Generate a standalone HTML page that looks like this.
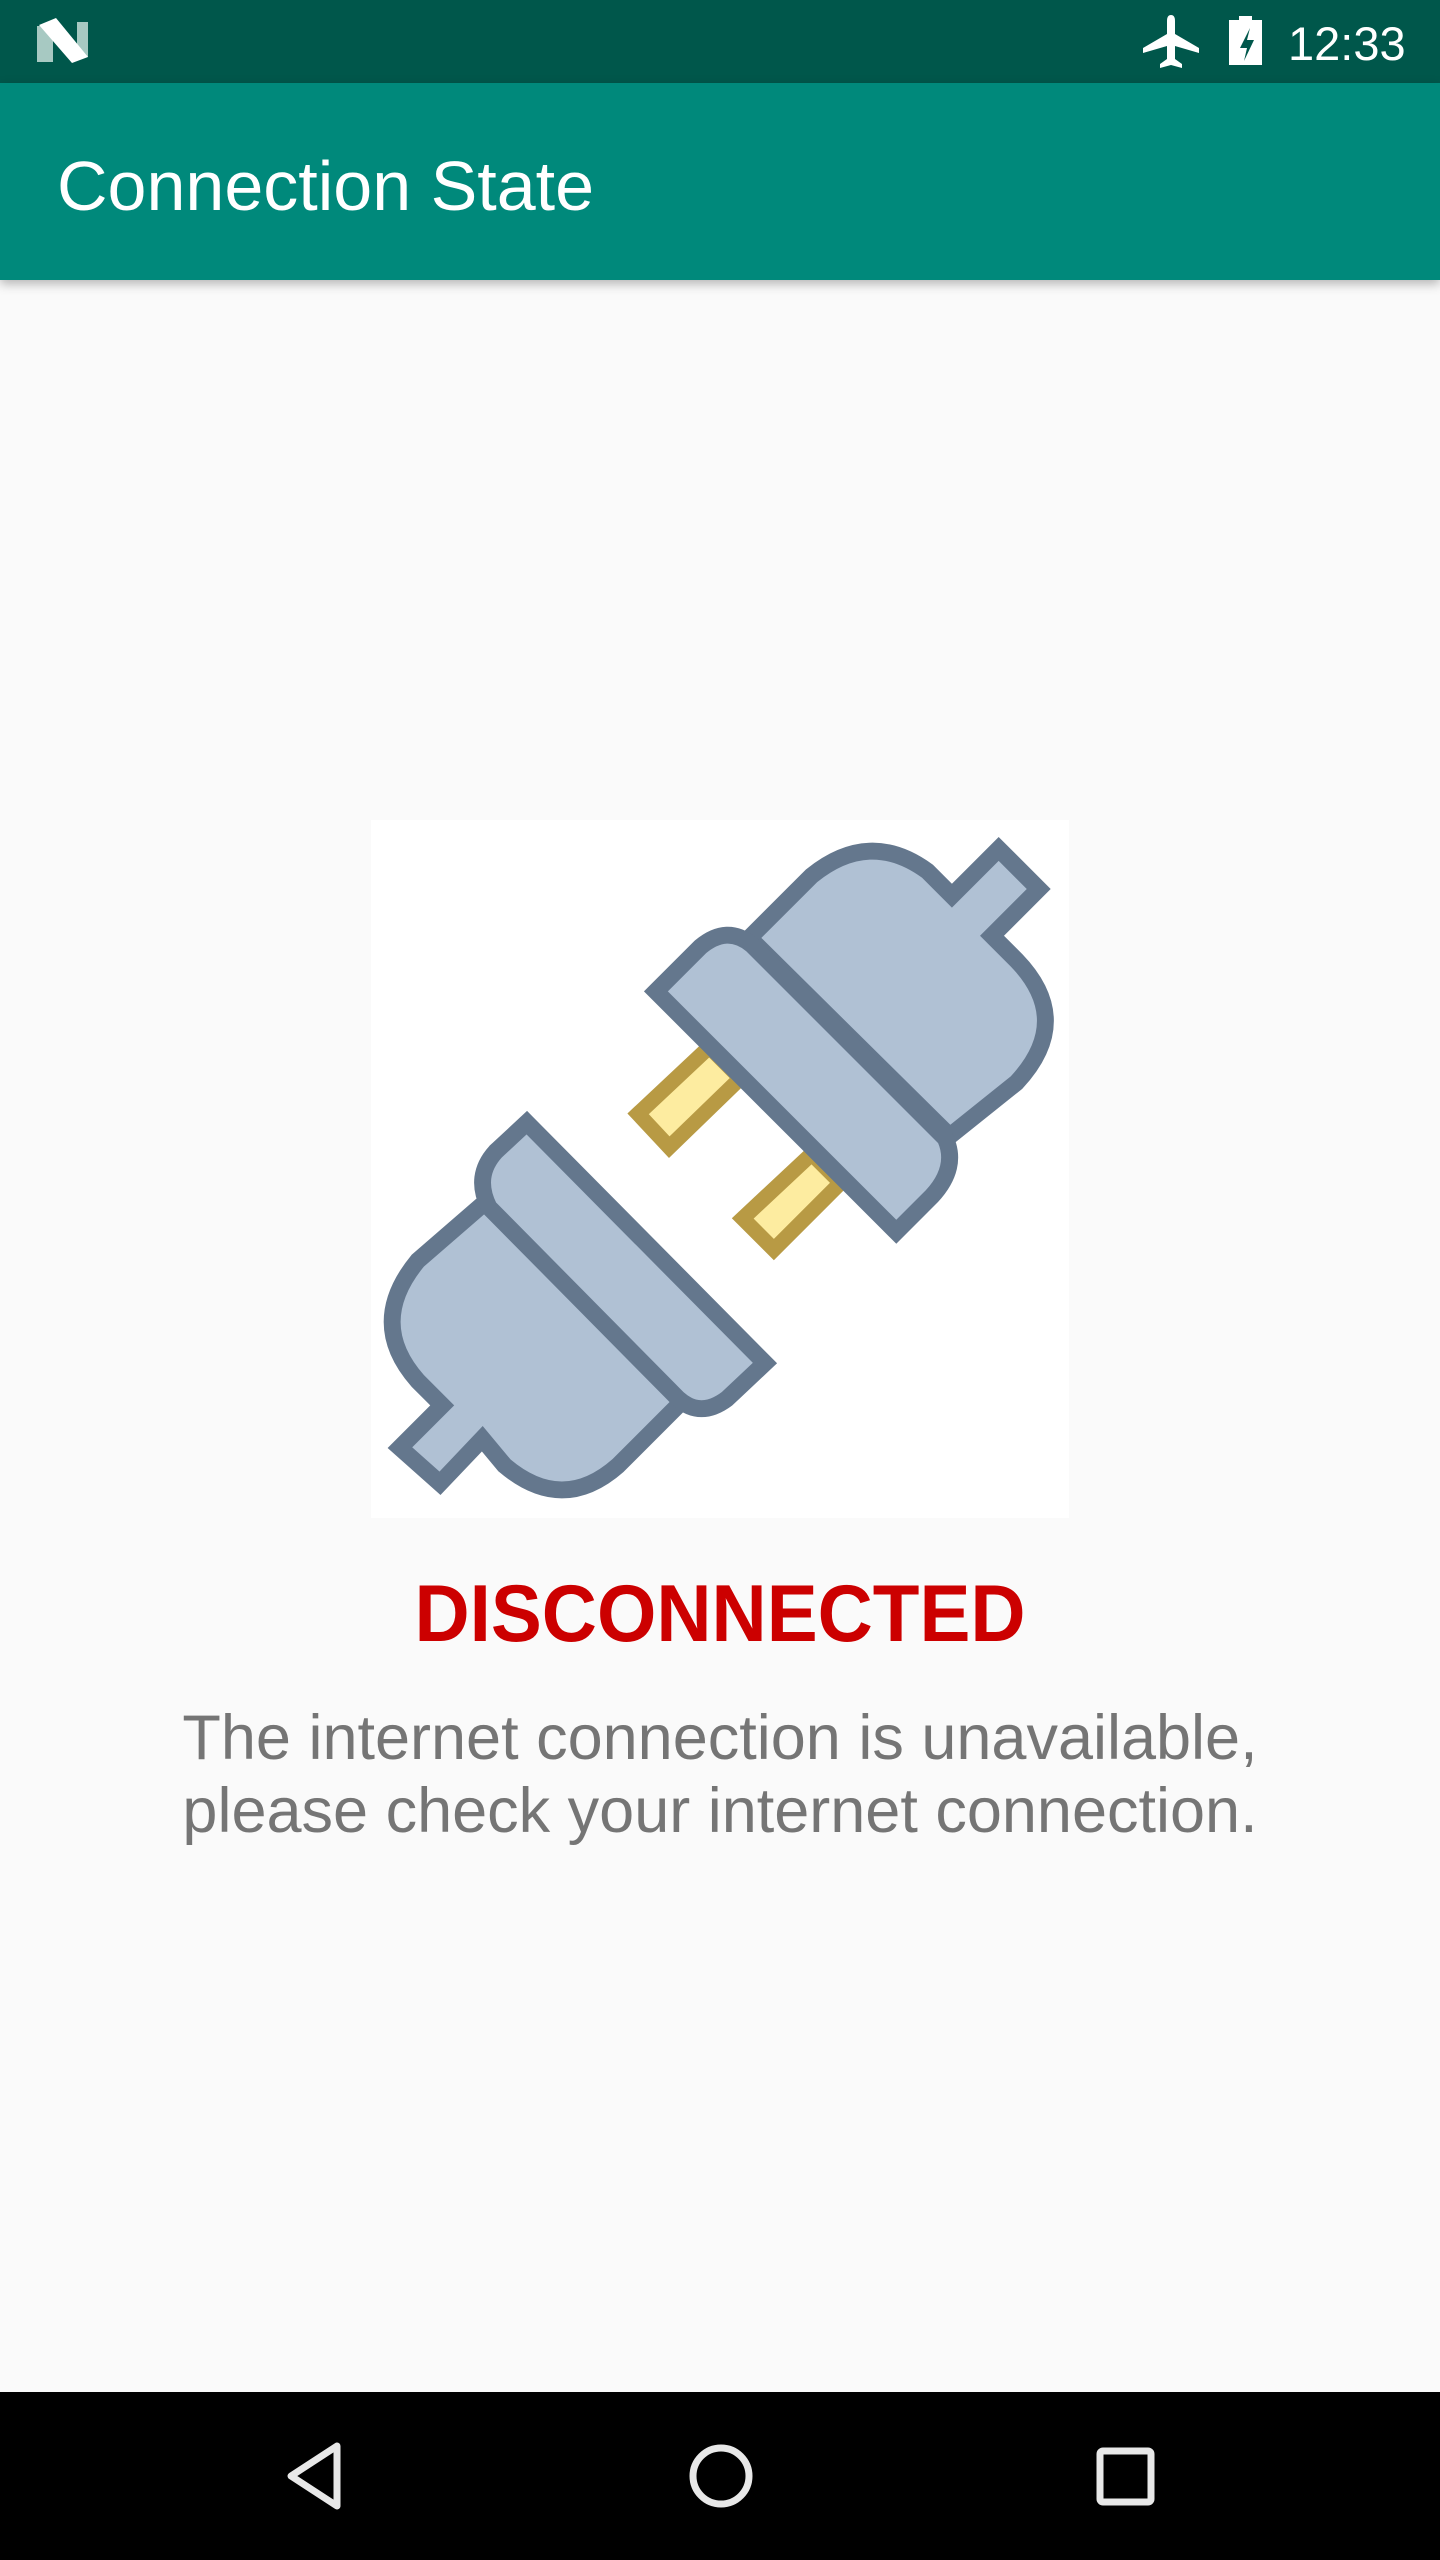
<!DOCTYPE html>
<html><head><meta charset="utf-8"><style>
html,body{margin:0;padding:0;width:1440px;height:2560px;overflow:hidden;background:#fafafa;font-family:"Liberation Sans",sans-serif;}
#sb{position:absolute;left:0;top:0;width:1440px;height:83px;background:#00574b;}
#ab{position:absolute;left:0;top:83px;width:1440px;height:197px;background:#00897b;box-shadow:0 4px 10px rgba(0,0,0,0.28);}
#title{position:absolute;left:57px;top:63px;color:#fff;font-size:70px;line-height:80px;}
#time{position:absolute;left:1288px;top:16px;color:#fff;font-size:47px;line-height:56px;}
#img{position:absolute;left:371px;top:820px;width:698px;height:698px;background:#fff;}
#dis{position:absolute;left:0;width:1440px;top:1566px;text-align:center;}
#dis span{display:inline-block;color:#cc0000;font-weight:bold;font-size:81px;line-height:96px;transform:scaleX(0.943);}
#msg{position:absolute;left:0;width:1440px;top:1702px;text-align:center;color:#757575;font-size:63px;line-height:73px;}
#nav{position:absolute;left:0;top:2392px;width:1440px;height:168px;background:#000;}
</style></head><body>
<div id="sb">
<svg width="1440" height="83" style="position:absolute;left:0;top:0">
<polygon points="37,26 53,26 53,62 37,62" fill="#a7c9c2"/>
<polygon points="77,22 88,22 88,57 77,57" fill="#a7c9c2"/>
<polygon points="39,25 56,18 88,57 72,63" fill="#fff"/>
<path d="M1171,15 q4,0 4,6 v13 l24,14 v5 l-24,-7 v13 l7,5 v4 l-11,-3 l-11,3 v-4 l7,-5 v-13 l-24,7 v-5 l24,-14 v-13 q0,-6 4,-6z" fill="#fff"/>
<path d="M1239,16 h13 v4 h10 v45 h-33 v-45 h10z" fill="#fff"/>
<path d="M1250,28 l-10,20 h7 l-3,13 l10,-21 h-7 l3,-12z" fill="#00574b"/>
</svg>
<div id="time">12:33</div>
</div>
<div id="ab"><div id="title">Connection State</div></div>
<div id="img">
<svg width="698" height="698" viewBox="0 0 1568 1568">
<g stroke="#b89a44" stroke-width="34" fill="#fdeca0" stroke-linejoin="miter">
<polygon points="600,660 760,510 830,580 670,735"/>
<polygon points="835,895 990,750 1055,815 905,965"/>
</g>
<g stroke="#64778d" stroke-width="38" fill="#b0c1d4" stroke-linejoin="miter">
<path d="M850,265 L990,125 Q1120,20 1250,115 L1305,170 L1410,65 L1500,155 L1395,260 L1450,315 Q1580,450 1450,590 L1300,710 Z"/>
<path d="M640,385 L740,285 Q800,235 855,280 L1290,715 Q1320,780 1260,845 L1180,925 Z"/>
<path d="M255,860 L700,1305 L555,1450 Q430,1560 300,1450 L250,1390 L155,1490 L65,1410 L160,1315 L105,1260 Q-10,1130 105,990 Z"/>
<path d="M350,680 L885,1220 L800,1300 Q740,1345 690,1300 L265,870 Q230,800 280,745 Z"/>
</g>
</svg>
</div>
<div id="dis"><span>DISCONNECTED</span></div>
<div id="msg">The internet connection is unavailable,<br>please check your internet connection.</div>
<div id="nav">
<svg width="1440" height="168" style="position:absolute;left:0;top:0">
<path d="M337,54 L291,84 L337,114 Z" fill="none" stroke="#e8e8e8" stroke-width="7" stroke-linejoin="round"/>
<circle cx="721" cy="84" r="28" fill="none" stroke="#e8e8e8" stroke-width="7"/>
<rect x="1100" y="59" width="51" height="51" rx="3" fill="none" stroke="#e8e8e8" stroke-width="7"/>
</svg>
</div>
</body></html>
